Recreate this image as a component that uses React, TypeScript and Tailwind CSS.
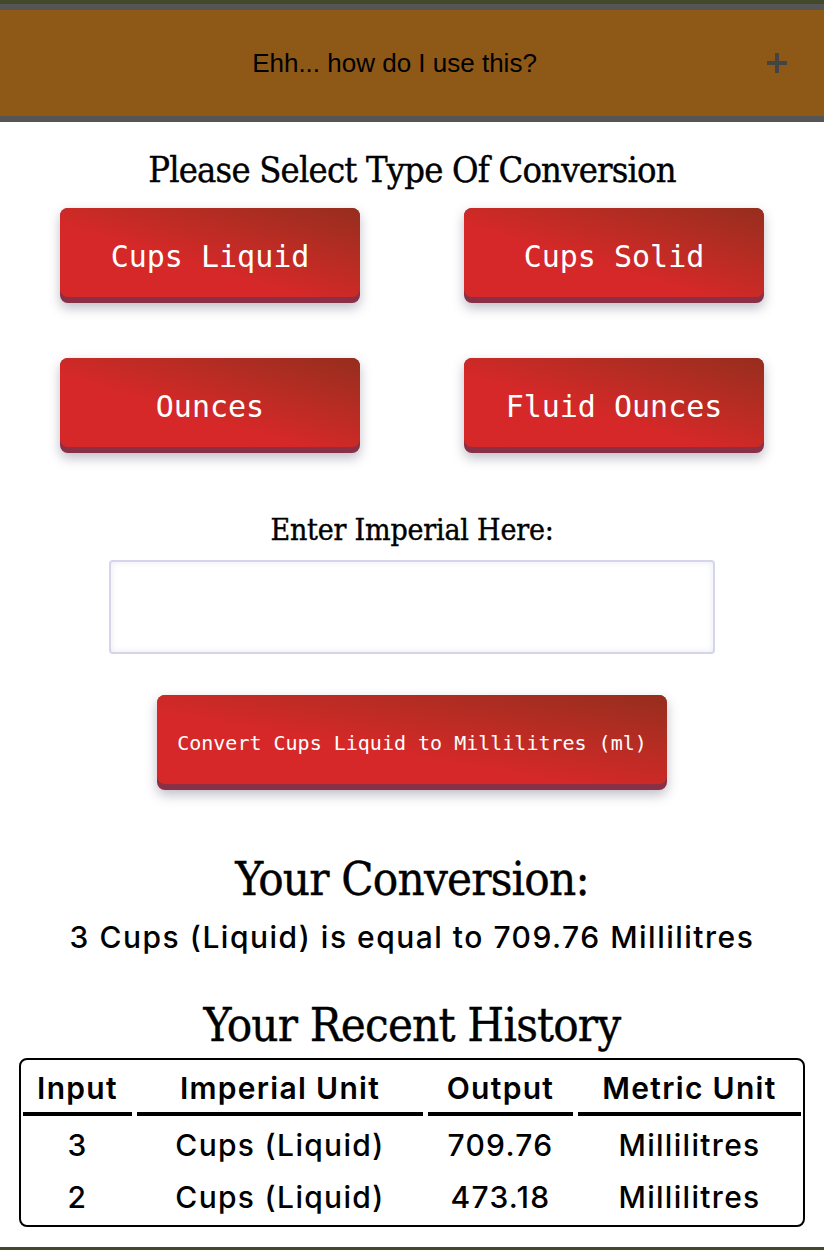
import { useState } from "react";

const types = ["Cups Liquid", "Cups Solid", "Ounces", "Fluid Ounces"];

const history = [
  { input: "3", unit: "Cups (Liquid)", output: "709.76", metric: "Millilitres" },
  { input: "2", unit: "Cups (Liquid)", output: "473.18", metric: "Millilitres" },
];

const serif = "font-['DejaVu_Serif_Condensed','DejaVu_Serif',serif] [-webkit-text-stroke:0.4px_black]";
const sans = "font-['Inter',sans-serif]";
const mono = "font-['DejaVu_Sans_Mono',monospace]";

function RedButton({ label, className, textClass }: { label: string; className: string; textClass: string }) {
  return (
    <button
      className={`rounded-lg bg-[#8a3046] pb-[6px] shadow-[0_5px_12px_rgba(70,70,100,0.35)] ${className}`}
    >
      <div
        className={`flex h-full items-center justify-center pt-[7px] rounded-lg bg-linear-to-tr from-[#d62828] from-40% to-[#962d1e] text-white ${mono} ${textClass}`}
      >
        {label}
      </div>
    </button>
  );
}

export default function App() {
  const [value, setValue] = useState("");

  return (
    <div className="min-h-[1250px] w-full bg-white flex flex-col">
      <div className="h-[4px] bg-[#42482a]" />
      <div className="border-y-[6px] border-[#555555] bg-[#8e5817] h-[118px] flex items-center">
        <div className="flex-1 text-center pl-[22px] text-[26px] text-black font-['Liberation_Sans',sans-serif]">
          Ehh... how do I use this?
        </div>
        <svg width="20" height="20" viewBox="0 0 20 20" className="mr-[37px]">
          <rect x="8" y="0" width="4" height="20" fill="#444" />
          <rect x="0" y="8" width="20" height="4" fill="#444" />
        </svg>
      </div>

      <div className="flex flex-col items-center">
        <h2 className={`mt-[28px] text-[36px] leading-[40px] tracking-[-0.8px] text-black ${serif}`}>
          Please Select Type Of Conversion
        </h2>

        <div className="mt-[18px] grid grid-cols-[300px_300px] gap-x-[104px] gap-y-[55px]">
          {types.map((t) => (
            <RedButton key={t} label={t} className="h-[95px]" textClass="text-[30px]" />
          ))}
        </div>

        <label className={`mt-[61px] text-[30px] leading-[32px] tracking-[-0.2px] text-black ${serif}`}>
          Enter Imperial Here:
        </label>
        <input
          value={value}
          onChange={(e) => setValue(e.target.value)}
          className="mt-[14px] w-[606px] h-[94px] rounded-[4px] border-2 border-[#d4d4ea] bg-white shadow-[inset_0_0_6px_rgba(200,200,230,0.4)] outline-none"
        />

        <RedButton
          label="Convert Cups Liquid to Millilitres (ml)"
          className="mt-[41px] w-[510px] h-[95px]"
          textClass="text-[20px]"
        />

        <h2 className={`mt-[64px] text-[47px] leading-[50px] tracking-[-0.8px] text-black ${serif}`}>
          Your Conversion:
        </h2>
        <p className={`mt-[15px] text-[30px] leading-[36px] font-medium tracking-[1.5px] text-black ${sans}`}>
          3 Cups (Liquid) is equal to 709.76 Millilitres
        </p>

        <h2 className={`mt-[44px] text-[47px] leading-[52px] tracking-[-0.8px] text-black ${serif}`}>
          Your Recent History
        </h2>

        <div className="mt-[7px] w-[786px] rounded-lg border-2 border-black pb-[5px]">
          <table
            className={`-mx-[3px] w-[calc(100%+6px)] border-separate border-spacing-x-[5px] border-spacing-y-0 text-black ${sans}`}
          >
            <thead>
              <tr className="text-[30px] font-semibold tracking-[1.3px]">
                <th className="w-[109px] border-b-4 border-black h-[56px] pt-[4px] font-semibold">Input</th>
                <th className="w-[286px] border-b-4 border-black pt-[4px] font-semibold">Imperial Unit</th>
                <th className="w-[145px] border-b-4 border-black pt-[4px] font-semibold">Output</th>
                <th className="border-b-4 border-black pt-[4px] font-semibold">Metric Unit</th>
              </tr>
            </thead>
            <tbody>
              {history.map((h, i) => (
                <tr key={i} className="text-[30px] font-medium tracking-[1.3px] text-center h-[52px]">
                  <td className="pt-[6px]">{h.input}</td>
                  <td className="pt-[6px]">{h.unit}</td>
                  <td className="pt-[6px]">{h.output}</td>
                  <td className="pt-[6px]">{h.metric}</td>
                </tr>
              ))}
            </tbody>
          </table>
        </div>
      </div>

      <div className="mt-auto h-[3px] bg-[#42482a]" />
    </div>
  );
}
